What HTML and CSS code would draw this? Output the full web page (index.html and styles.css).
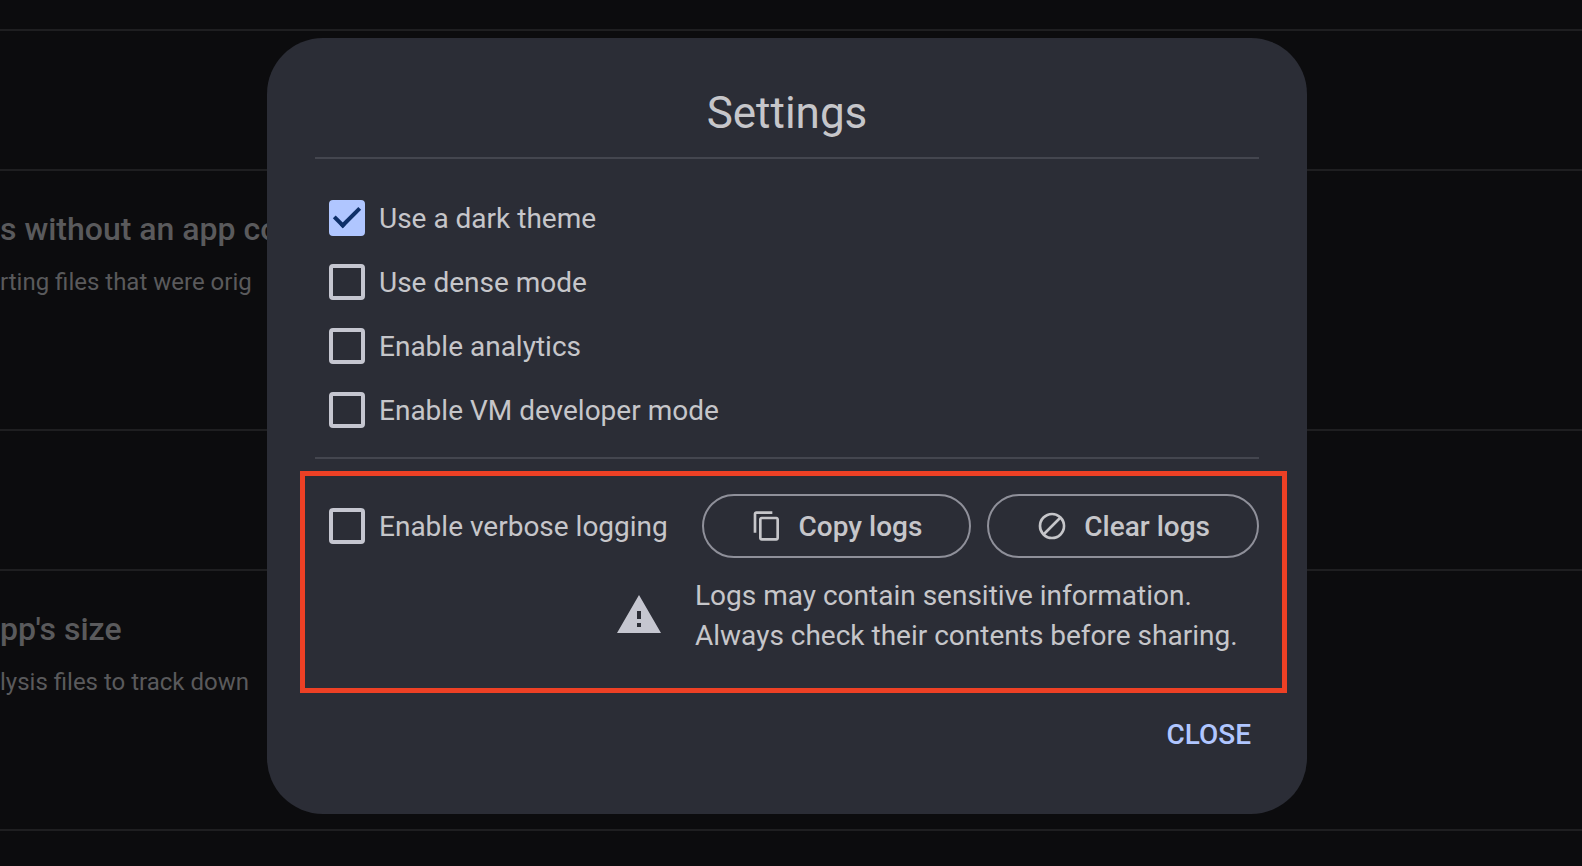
FILE: index.html
```html
<!DOCTYPE html>
<html lang="en">
<head>
<meta charset="UTF-8" />
<meta name="viewport" content="width=device-width, initial-scale=1" />
<title>Settings</title>
<link rel="stylesheet" href="styles.css">
</head>
<body>

<main class="page">
  <div class="card-header"></div>
  <div class="card">
    <h2>s without an app co</h2>
    <p>rting files that were orig</p>
  </div>
  <div class="card-header"></div>
  <div class="card">
    <h2>pp's size</h2>
    <p>lysis files to track down</p>
  </div>
</main>

<div class="overlay">
  <div class="dialog" role="dialog" aria-modal="true" aria-labelledby="dialog-title">
    <h1 id="dialog-title">Settings</h1>

    <div class="options">
      <label class="option"><input type="checkbox" checked /> Use a dark theme</label>
      <label class="option"><input type="checkbox" /> Use dense mode</label>
      <label class="option"><input type="checkbox" /> Enable analytics</label>
      <label class="option"><input type="checkbox" /> Enable VM developer mode</label>
    </div>

    <section class="logging">
      <div class="logging-row">
        <label class="option"><input type="checkbox" /> Enable verbose logging</label>
        <div class="log-buttons">
          <button type="button" class="outlined">
            <svg viewBox="0 0 24 24" aria-hidden="true"><path d="M16 1H4c-1.1 0-2 .9-2 2v14h2V3h12V1zm3 4H8c-1.1 0-2 .9-2 2v14c0 1.1.9 2 2 2h11c1.1 0 2-.9 2-2V7c0-1.1-.9-2-2-2zm0 16H8V7h11v14z"/></svg>
            Copy logs
          </button>
          <button type="button" class="outlined">
            <svg viewBox="0 0 24 24" aria-hidden="true"><path d="M12 2a10 10 0 1 0 0 20 10 10 0 0 0 0-20zM4 12a8 8 0 0 1 12.900-6.310L5.690 16.900A7.900 7.900 0 0 1 4 12zm8 8a7.900 7.900 0 0 1-4.900-1.690L18.310 7.100A8 8 0 0 1 12 20z"/></svg>
            Clear logs
          </button>
        </div>
      </div>
      <div class="warning">
        <svg viewBox="0 0 24 24" aria-hidden="true"><path d="M1 21h22L12 2 1 21zm12-3h-2v-2h2v2zm0-4h-2v-4h2v4z"/></svg>
        <p>Logs may contain sensitive information.<br>Always check their contents before sharing.</p>
      </div>
    </section>

    <div class="actions">
      <button type="button" class="text-button">CLOSE</button>
    </div>
  </div>
</div>

</body>
</html>
```
FILE: styles.css
```css
* { box-sizing: border-box; }
body { margin: 0; height: 100vh; overflow: hidden; background: #0c0c0e; color: #c6c6ca; font-family: Roboto, sans-serif; font-size: 28px; }
h1, h2, p { margin: 0; font-weight: 400; }
svg { flex: none; fill: currentColor; }

/* page behind the dialog */
.page { padding-top: 29px; color: #5a5a5c; white-space: nowrap; }
.card-header { height: 140px; border-top: 2px solid #1f1f21; }
.card { height: 260px; padding-top: 38px; border-top: 2px solid #1f1f21; }
.card:last-child { height: 262px; border-bottom: 2px solid #1f1f21; }
.card h2 { font-size: 32px; font-weight: 500; line-height: 40px; }
.card p { margin-top: 17px; font-size: 24px; line-height: 32px; }

.overlay { position: fixed; inset: 0; display: flex; justify-content: center; align-items: flex-start; padding: 38px 8px 0 0; }
.dialog { width: 1040px; max-width: 100%; padding: 48px; background: #2b2d36; border-radius: 56px; }
.dialog h1 { padding: 1px 0 18px; border-bottom: 2px solid #44464f; font-size: 44px; line-height: 52px; text-align: center; }

.options { padding: 27px 0 15px; border-bottom: 2px solid #44464f; }
.option { display: flex; align-items: center; gap: 14px; height: 64px; padding-left: 14px; }

input[type="checkbox"] { appearance: none; display: grid; place-items: center; width: 36px; height: 36px; margin: 0; border: 4px solid #c5c6d0; border-radius: 4px; }
input[type="checkbox"]:checked { border-color: #b0c6ff; background: #b0c6ff; }
input[type="checkbox"]:checked::after { content: ""; box-sizing: border-box; width: 26px; height: 14px; border: solid #0e2f68; border-width: 0 0 4px 4px; transform: translateY(-4px) rotate(-45deg); }

/* highlighted block, wider than the dialog content */
.logging { margin: 12px -28px 0 -15px; padding: 18px 23px 32px 10px; border: 5px solid #ed4025; }
.logging-row { display: flex; justify-content: space-between; align-items: center; }
.log-buttons { display: flex; gap: 16px; }

button { color: inherit; background: none; border: 0; font: inherit; font-weight: 500; cursor: pointer; }
.outlined { display: flex; align-items: center; gap: 16px; height: 64px; padding: 0 47px; border: 2px solid #8f909a; border-radius: 32px; }
.outlined svg { width: 32px; height: 32px; }

.warning { display: flex; justify-content: flex-end; align-items: center; gap: 32px; margin-top: 16px; line-height: 40px; }
.warning p { flex: 0 1 564px; padding-top: 2px; }
.warning svg { width: 48px; height: 48px; color: #c5c6d0; }

.actions { display: flex; justify-content: flex-end; margin-top: 9px; }
.text-button { height: 64px; padding: 0 8px; color: #b0c6ff; }
```
